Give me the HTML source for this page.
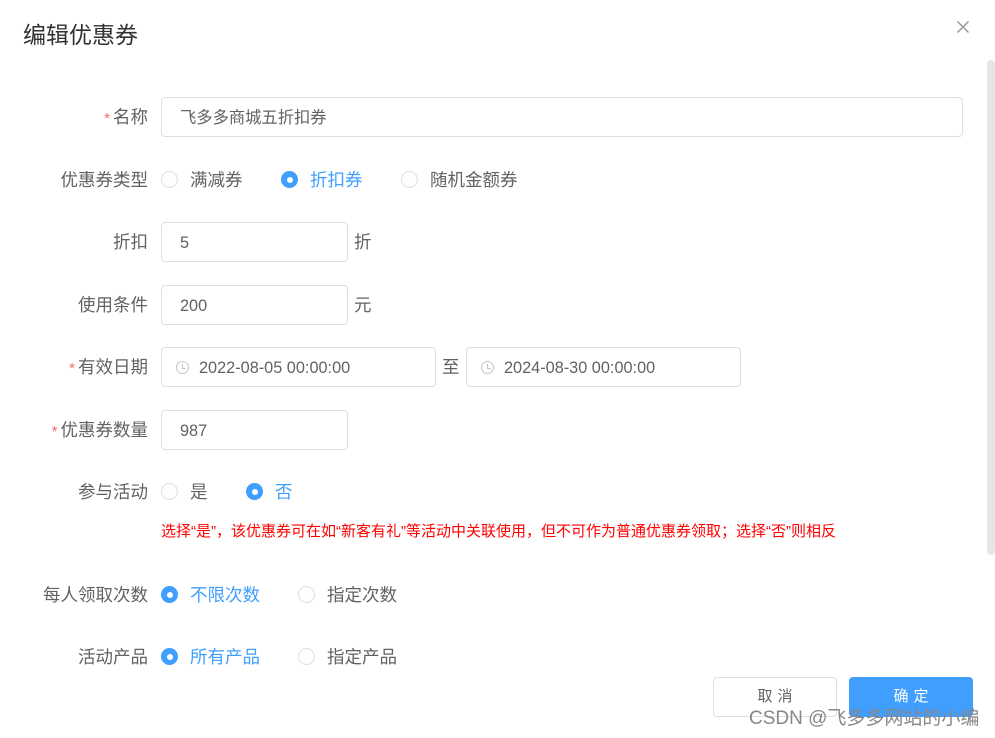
<!DOCTYPE html>
<html><head><meta charset="utf-8"><style>
*{box-sizing:border-box;margin:0;padding:0}
body{width:995px;height:738px;background:#fff;font-family:"Liberation Sans","Noto Sans CJK SC",sans-serif;color:#606266;position:relative;overflow:hidden}
.title{position:absolute;left:23px;top:16px;font-size:23px;color:#303133}
.close{position:absolute;left:957px;top:21px;width:12px;height:12px}
.sb{position:absolute;left:987px;top:60px;width:8px;height:495px;background:#e6e6e6;border-radius:4px}
.lab{position:absolute;right:847px;font-size:17.5px;color:#606266;white-space:nowrap;line-height:22px}
.req{color:#f56c6c;font-size:15px;margin-right:3px}
.inp{position:absolute;height:40px;border:1px solid #dcdfe6;border-radius:4px;font-size:16.3px;color:#606266;line-height:40px;padding-left:18px}
.t{position:absolute;font-size:17.5px;line-height:22px;white-space:nowrap}
.r{position:absolute;width:17px;height:17px;border:1px solid #dcdfe6;border-radius:50%;background:#fff}
.r.on{background:#409eff;border-color:#409eff}
.r.on:after{content:"";position:absolute;left:4.5px;top:4.5px;width:6px;height:6px;border-radius:50%;background:#fff}
.blue{color:#409eff}
.clk{position:absolute;left:14px;top:13px;width:13px;height:13px;border:1.3px solid #c0c4cc;border-radius:50%}
.clk:after{content:"";position:absolute;left:4.5px;top:2px;width:3px;height:4px;border-left:1.3px solid #c0c4cc;border-bottom:1.3px solid #c0c4cc}
.btn{position:absolute;top:677px;width:124px;height:40px;border-radius:4px;font-size:15px;text-align:center;line-height:40px;letter-spacing:5px;text-indent:5px}
</style></head><body>
<div class="title">编辑优惠券</div>
<svg class="close" viewBox="0 0 12 12"><path d="M0.5 0.5L11.5 11.5M11.5 0.5L0.5 11.5" stroke="#909399" stroke-width="1.3"/></svg>
<div class="sb"></div>

<div class="lab" style="top:106px"><span class="req">*</span>名称</div>
<div class="inp" style="left:161px;top:97px;width:802px">飞多多商城五折扣券</div>

<div class="lab" style="top:169px">优惠券类型</div>
<div class="r" style="left:161px;top:171px"></div><div class="t" style="left:190px;top:169px">满减券</div>
<div class="r on" style="left:281px;top:171px"></div><div class="t blue" style="left:310px;top:169px">折扣券</div>
<div class="r" style="left:401px;top:171px"></div><div class="t" style="left:430px;top:169px">随机金额券</div>

<div class="lab" style="top:231px">折扣</div>
<div class="inp" style="left:161px;top:222px;width:187px">5</div>
<div class="t" style="left:354px;top:231px">折</div>

<div class="lab" style="top:294px">使用条件</div>
<div class="inp" style="left:161px;top:285px;width:187px">200</div>
<div class="t" style="left:354px;top:294px">元</div>

<div class="lab" style="top:356px"><span class="req">*</span>有效日期</div>
<div class="inp" style="left:161px;top:347px;width:275px;padding-left:37px"><span class="clk"></span>2022-08-05 00:00:00</div>
<div class="t" style="left:442px;top:356px">至</div>
<div class="inp" style="left:466px;top:347px;width:275px;padding-left:37px"><span class="clk"></span>2024-08-30 00:00:00</div>

<div class="lab" style="top:419px"><span class="req">*</span>优惠券数量</div>
<div class="inp" style="left:161px;top:410px;width:187px">987</div>

<div class="lab" style="top:481px">参与活动</div>
<div class="r" style="left:161px;top:483px"></div><div class="t" style="left:190px;top:481px">是</div>
<div class="r on" style="left:246px;top:483px"></div><div class="t blue" style="left:275px;top:481px">否</div>
<div class="t" style="left:161px;top:521px;font-size:15px;color:#f00">选择“是”，该优惠券可在如“新客有礼”等活动中关联使用，但不可作为普通优惠券领取；选择“否”则相反</div>

<div class="lab" style="top:584px">每人领取次数</div>
<div class="r on" style="left:161px;top:586px"></div><div class="t blue" style="left:190px;top:584px">不限次数</div>
<div class="r" style="left:298px;top:586px"></div><div class="t" style="left:327px;top:584px">指定次数</div>

<div class="lab" style="top:646px">活动产品</div>
<div class="r on" style="left:161px;top:648px"></div><div class="t blue" style="left:190px;top:646px">所有产品</div>
<div class="r" style="left:298px;top:648px"></div><div class="t" style="left:327px;top:646px">指定产品</div>

<div class="btn" style="left:713px;border:1px solid #dcdfe6;color:#606266;line-height:38px">取消</div>
<div class="btn" style="left:849px;background:#409eff;color:#fff">确定</div>
<div class="t" style="left:749px;top:707px;font-size:19px;line-height:24px;color:#888">CSDN @飞多多网站的小编</div>
</body></html>
